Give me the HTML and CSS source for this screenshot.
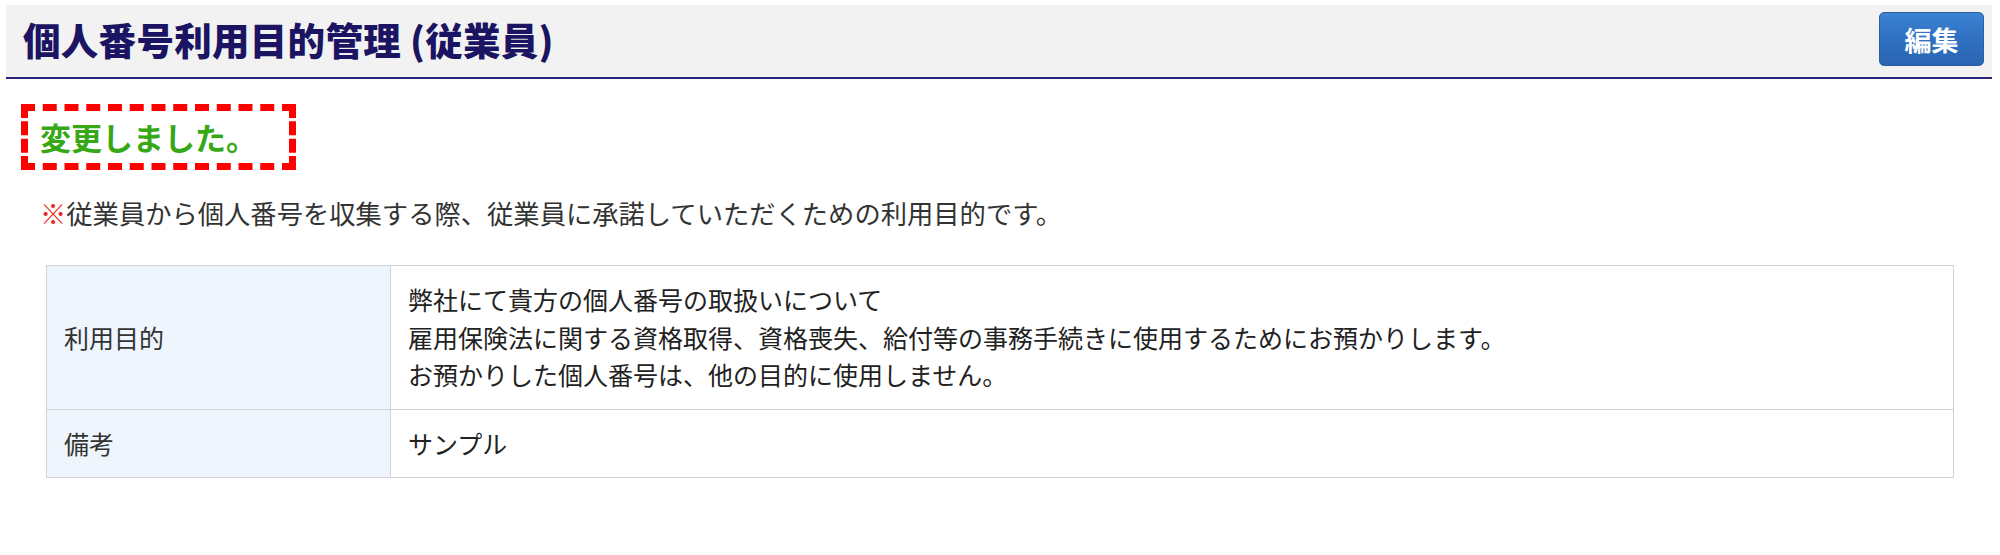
FILE: index.html
```html
<!DOCTYPE html>
<html lang="ja">
<head>
<meta charset="utf-8">
<title>個人番号利用目的管理 (従業員)</title>
<link rel="stylesheet" href="styles.css">
</head>
<body>
<div class="page">
  <header class="page-header">
    <h1 class="page-title">個人番号利用目的管理 (従業員)</h1>
    <button class="btn-edit" type="button">編集</button>
  </header>

  <div class="flash">
    <p class="flash-text">変更しました。</p>
  </div>

  <p class="note"><span class="note-mark">※</span>従業員から個人番号を収集する際、従業員に承諾していただくための利用目的です。</p>

  <table class="detail">
    <tr>
      <th>利用目的</th>
      <td>弊社にて貴方の個人番号の取扱いについて<br>雇用保険法に関する資格取得、資格喪失、給付等の事務手続きに使用するためにお預かりします。<br>お預かりした個人番号は、他の目的に使用しません。</td>
    </tr>
    <tr>
      <th>備考</th>
      <td>サンプル</td>
    </tr>
  </table>
</div>
</body>
</html>
```

FILE: styles.css
```css
html, body {
  margin: 0;
  padding: 0;
  background: #ffffff;
}

body {
  font-family: "Noto Sans CJK JP", "Noto Sans", sans-serif;
  color: #333333;
}

.page {
  padding: 5px 8px 0 6px;
}

.page-header {
  display: flex;
  align-items: center;
  justify-content: space-between;
  height: 72px;
  background: #f2f2f2;
  border-bottom: 2px solid #27247c;
  padding: 0 8px 0 17px;
}

.page-title {
  margin: 0;
  font-size: 37.5px;
  font-weight: 900;
  line-height: 44px;
  color: #1b1462;
  letter-spacing: 0.3px;
  position: relative;
  top: -2px;
}

.btn-edit {
  width: 105px;
  height: 54px;
  margin-top: -4px;
  border: 1px solid #2a5e9e;
  border-radius: 5px;
  background: linear-gradient(to bottom, #3b82d2 0%, #2f6fc0 55%, #2a64b2 100%);
  color: #ffffff;
  font-family: "Noto Sans CJK JP", sans-serif;
  font-size: 27px;
  font-weight: bold;
  line-height: 1;
  padding: 0;
  cursor: pointer;
}

.flash {
  display: inline-block;
  margin: 25px 0 0 15px;
  width: 261px;
  height: 52px;
  border: 7px dashed #ff0000;
  box-sizing: content-box;
}

.flash-text {
  margin: 0;
  padding-left: 12px;
  font-size: 31px;
  font-weight: bold;
  line-height: 52px;
  color: #36a815;
}

.note {
  margin: 25px 0 0 34px;
  font-size: 26.3px;
  line-height: 36px;
  color: #333333;
}

.note-mark {
  color: #e8291f;
}

.detail {
  margin: 34px 38px 0 40px;
  width: calc(100% - 78px);
  border-collapse: collapse;
  font-size: 25px;
  line-height: 37.5px;
}

.detail th,
.detail td {
  border: 1px solid #d2d2d2;
  padding: 15px 17px;
  text-align: left;
  vertical-align: middle;
  font-weight: normal;
}

.detail th {
  width: 309px;
  background: #eef5fd;
  color: #333333;
}

.detail td {
  background: #ffffff;
  color: #222222;
}
```
